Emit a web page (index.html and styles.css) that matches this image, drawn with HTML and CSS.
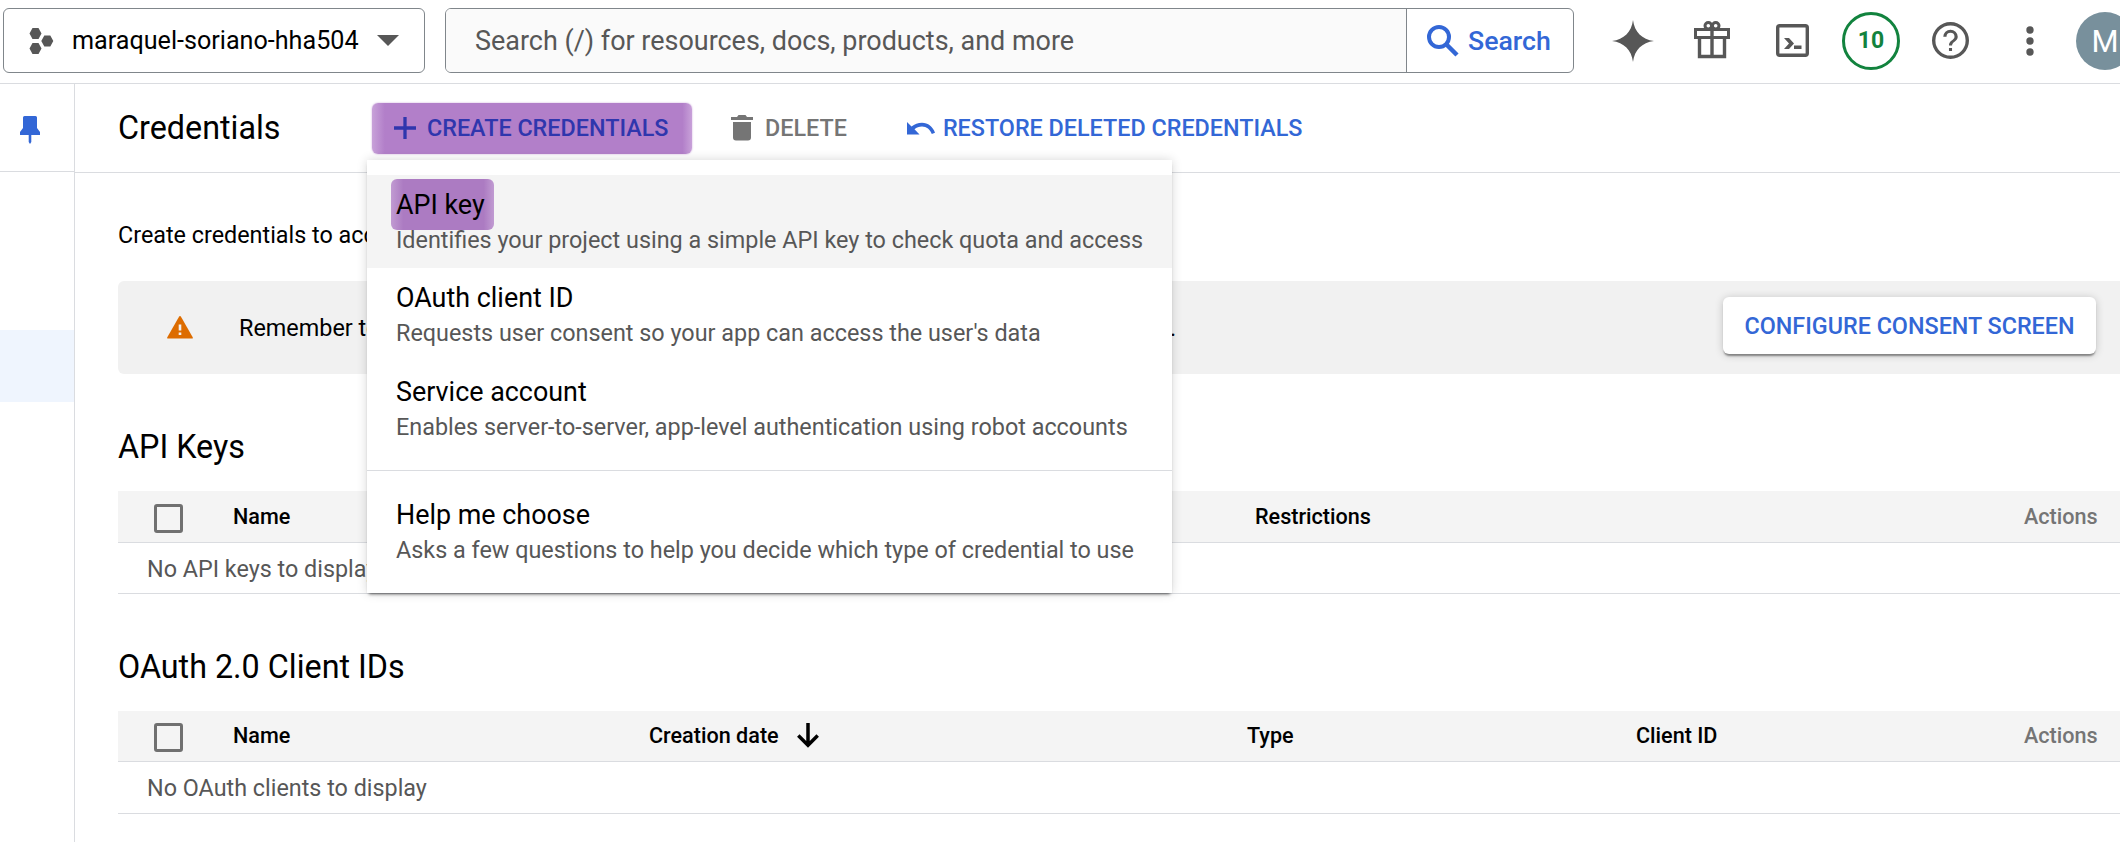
FILE: index.html
```html
<!DOCTYPE html>
<html lang="en">
<head>
<meta charset="utf-8">
<title>Credentials</title>
<link rel="stylesheet" href="styles.css">
</head>
<body>
<header class="topbar">
  <button class="project">
    <svg class="project-icon" width="25" height="28" viewBox="0 0 25 28"><path d="M3.500 1h6l3 5.500-3 5.500h-6l-3-5.500zM3.500 16h6l3 5.500-3 5.500h-6l-3-5.500zM15.300 8.500h6l3 5.500-3 5.500h-6l-3-5.500z" fill="#575757"/></svg>
    <span class="project-name">maraquel-soriano-hha504</span>
    <svg class="caret" width="22" height="11" viewBox="0 0 22 11"><path d="M0 0h22L11 11z" fill="#575757"/></svg>
  </button>
  <div class="search">
    <div class="search-input">Search (/) for resources, docs, products, and more</div>
    <button class="search-button">
      <svg width="32" height="32" viewBox="0 0 32 32" fill="none" stroke="#3367d6"><circle cx="12" cy="12" r="10" stroke-width="4"/><path d="M19 19l11 11" stroke-width="4.500"/></svg>
      <span>Search</span>
    </button>
  </div>
  <nav class="tools">
    <svg class="t-spark" width="42" height="42" viewBox="0 0 42 42"><path d="M21 0C22.500 12 30 19.500 42 21C30 22.500 22.500 30 21 42C19.500 30 12 22.500 0 21C12 19.500 19.500 12 21 0z" fill="#575757"/></svg>
    <svg class="t-gift" width="36" height="38" viewBox="0 0 36 38" fill="none" stroke="#575757"><path d="M1.500 8.500h33v8h-33z" stroke-width="3"/><path d="M5.500 17v18.500h25V17M18 8v28" stroke-width="3.400"/><circle cx="14.300" cy="4.800" r="3.300" stroke-width="3"/><circle cx="21.700" cy="4.800" r="3.300" stroke-width="3"/></svg>
    <svg class="t-shell" width="33" height="33" viewBox="0 0 33 33"><rect x="1.700" y="1.700" width="29.600" height="29.600" rx="2" fill="none" stroke="#575757" stroke-width="3.400"/><path d="M8 14h5l5 5.500-5 5.500H8l5-5.500zM18 21.500h7.500V25H18z" fill="#575757"/></svg>
    <span class="t-count">10</span>
    <svg class="t-help" width="37" height="37" viewBox="0 0 24 24"><path fill="#575757" d="M11 18.800h2v-2h-2zm1-18.800a12 12 0 1 0 0 24 12 12 0 0 0 0-24zm0 21.800a9.800 9.800 0 1 1 0-19.600 9.800 9.800 0 0 1 0 19.600zM12 5a4.700 4.700 0 0 0-4.700 4.600h2.100A2.600 2.600 0 0 1 12 7a2.600 2.600 0 0 1 2.600 2.600c0 2.300-3.600 2.200-3.600 5.700h2c0-2.500 3.700-2.900 3.700-5.800A4.700 4.700 0 0 0 12 5z"/></svg>
    <svg class="t-more" width="8" height="30" viewBox="0 0 8 30" fill="#575757"><circle cx="4" cy="4" r="3.700"/><circle cx="4" cy="15" r="3.700"/><circle cx="4" cy="26" r="3.700"/></svg>
    <span class="t-avatar">M</span>
  </nav>
</header>
<div class="shell">
  <aside class="rail">
    <div class="rail-pin"><svg width="20" height="28" viewBox="0 0 20 28"><path d="M4.500 0h11q1.500 0 1.500 1.500V12l3 4v3h-8.700v7L10 28l-1.300-2v-7H0v-3l3-4V1.500Q3 0 4.500 0z" fill="#3367d6"/></svg></div>
    <div class="rail-active"></div>
  </aside>
  <main class="main">
    <div class="titlebar">
      <h1 class="title">Credentials</h1>
      <button class="action create">
        <svg width="22" height="22" viewBox="0 0 22 22"><path d="M11 0v22M0 11h22" stroke="#2f36ad" stroke-width="3.300"/></svg>
        <span class="action-text">CREATE CREDENTIALS</span>
      </button>
      <button class="action delete">
        <svg width="22" height="26" viewBox="0 0 22 26"><path d="M0 2h6l1.500-2h7L16 2h6v3H0zM2 7h18v15.500q0 3-3 3H5q-3 0-3-3z" fill="#757575"/></svg>
        <span class="action-text">DELETE</span>
      </button>
      <button class="action restore">
        <svg width="28" height="13" viewBox="0 0 28 13"><path d="M0 0l4.500 4.500C7.500 2.300 11 .8 15 .8c6 0 11 4 13 10l-3.200 1.200C23.300 7.500 19.500 4.500 15 4.500c-3 0-5.500 1-7.500 2.800L12.500 12.500H0z" fill="#3367d6"/></svg>
        <span class="action-text">RESTORE DELETED CREDENTIALS</span>
      </button>
    </div>
    <div class="content">
      <p class="intro">Create credentials to access your enabled APIs</p>
      <div class="banner">
        <svg width="26" height="23" viewBox="0 0 26 23"><path d="M13 0q.6 0 1 .7L25.700 21.300q.5 1.200-.7 1.200H1q-1.200 0-.7-1.200L12 .7q.4-.7 1-.7z" fill="#dd6c00"/><path d="M11.700 8.500h2.600v6h-2.600zM11.700 16.500h2.600V19h-2.600z" fill="#f1f1f1"/></svg>
        <span class="banner-text">Remember to configure the OAuth consent screen with information about your application.</span>
        <button class="consent">CONFIGURE CONSENT SCREEN</button>
      </div>
      <h2 class="section-title">API Keys</h2>
      <div class="table keys">
        <div class="thead"><span class="check"></span><span>Name</span><span>Restrictions</span><span class="muted">Actions</span></div>
        <div class="trow">No API keys to display</div>
      </div>
      <h2 class="section-title">OAuth 2.0 Client IDs</h2>
      <div class="table clients">
        <div class="thead"><span class="check"></span><span>Name</span><span class="sorted">Creation date <svg width="22" height="25" viewBox="0 0 22 25" fill="none" stroke="#000" stroke-width="3.500"><path d="M11 0v22.500M1.300 12.500l9.700 9.700 9.700-9.700"/></svg></span><span>Type</span><span>Client ID</span><span class="muted">Actions</span></div>
        <div class="trow">No OAuth clients to display</div>
      </div>
    </div>
  </main>
</div>
<div class="menu">
  <div class="item active"><div class="item-title"><span class="mark">API key</span></div><div class="item-desc">Identifies your project using a simple API key to check quota and access</div></div>
  <div class="item"><div class="item-title">OAuth client ID</div><div class="item-desc">Requests user consent so your app can access the user's data</div></div>
  <div class="item"><div class="item-title">Service account</div><div class="item-desc">Enables server-to-server, app-level authentication using robot accounts</div></div>
  <div class="menu-rule"></div>
  <div class="item"><div class="item-title">Help me choose</div><div class="item-desc">Asks a few questions to help you decide which type of credential to use</div></div>
</div>
</body>
</html>
```
FILE: styles.css
```css
* { box-sizing: border-box; }
body { margin: 0; width: 2120px; height: 842px; overflow: hidden; background: #fff; color: #000; font-family: Roboto, "Liberation Sans", sans-serif; font-size: 23.350px; position: relative; }
button { font: inherit; color: inherit; background: none; border: 0; padding: 0; margin: 0; }
h1, h2, p { margin: 0; font-weight: 400; }
svg { display: block; flex: none; }
span, p, h1, h2, .item-title, .item-desc, .search-input, .trow { white-space: nowrap; }

.topbar { display: flex; height: 84px; padding: 8px 0 0 3px; border-bottom: 1px solid #dadce0; overflow: hidden; }
.project { display: flex; align-items: center; width: 422px; height: 65px; border: 1px solid #80868b; border-radius: 6px; padding: 0 25px; flex: none; }
.project-name { font-size: 25.150px; margin-left: 18px; width: 307px; text-align: left; }
.search { display: flex; width: 1129px; height: 65px; margin-left: 20px; border: 1px solid #80868b; border-radius: 6px; flex: none; overflow: hidden; }
.search-input { width: 961px; padding-left: 29px; line-height: 65px; background: #fafafa; color: #575757; font-size: 26.950px; border-right: 1px solid #80868b; }
.search-button { display: flex; align-items: center; padding-left: 20px; gap: 9px; color: #3367d6; font-size: 26.700px; font-weight: 500; }
.tools { display: flex; align-items: center; height: 65px; }
.t-spark { margin-left: 38px; }
.t-gift { margin-left: 40px; margin-top: -1px; }
.t-shell { margin-left: 46px; }
.t-count { width: 58px; height: 58px; margin-left: 33px; border: 3px solid #12833e; border-radius: 50%; line-height: 52px; text-align: center; color: #12833e; font-size: 23px; font-weight: 700; }
.t-help { margin-left: 32px; }
.t-more { margin-left: 57px; }
.t-avatar { width: 58px; height: 58px; flex: none; margin-left: 42px; border-radius: 50%; background: #78909c; color: #fff; font-size: 31px; line-height: 60px; text-align: center; }

.shell { display: flex; height: 758px; }
.rail { width: 75px; flex: none; border-right: 1px solid #dadce0; }
.rail-pin { height: 88px; padding: 32px 0 0 20px; border-bottom: 1px solid #dadce0; }
.rail-active { height: 72px; margin-top: 158px; background: #eff5fe; }
.main { flex: 1; min-width: 0; }
.titlebar { display: flex; align-items: center; height: 89px; padding: 2px 0 2px 43px; border-bottom: 1px solid #dadce0; }
.title { font-size: 32.300px; width: 254px; }
.action { display: flex; align-items: center; gap: 12px; height: 51px; font-weight: 500; }
.action-text { line-height: 30px; }
.create { width: 320px; padding-left: 22px; gap: 11px; border-radius: 6px; color: #2f36ad; background: linear-gradient(90deg, #c8a1d9, #b27fc9 4%, #b27fc9 97%, #c8a1d9); box-shadow: 0 0 2px #c8a1d9; }
.delete { color: #757575; margin-left: 39px; }
.restore { color: #3367d6; margin-left: 60px; gap: 8px; }

.content { padding-left: 43px; overflow: hidden; }
.intro { height: 108px; padding-top: 47px; line-height: 30px; }
.banner { display: flex; align-items: center; height: 93px; padding-left: 49px; background: #f1f1f1; border-radius: 6px 0 0 6px; }
.banner-text { margin-left: 46px; width: 1484px; padding-top: 1px; font-size: 23.400px; }
.consent { width: 373px; height: 57px; margin-bottom: 4px; border-radius: 6px; background: #fff; color: #3367d6; font-weight: 500; box-shadow: 0 3px 2px -1px rgba(0,0,0,.4), 0 1px 8px rgba(0,0,0,.2); }
.section-title { font-size: 32.300px; line-height: 40px; height: 117px; padding-top: 53px; }
.thead { display: grid; align-items: center; height: 52px; padding: 0 22px 1px 36px; background: #f4f4f4; border-bottom: 1px solid #dadce0; font-size: 21.600px; font-weight: 500; }
.keys .thead { grid-template-columns: 79px 1022px 769px 80px; }
.clients .thead { grid-template-columns: 79px 416px 598px 389px 388px 80px; height: 51px; }
.check { width: 29px; height: 29px; margin-top: 5px; border: 3px solid #707070; border-radius: 3px; }
.clients .check { margin-top: 4px; }
.muted { color: #757575; }
.sorted { display: flex; align-items: center; gap: 18px; }
.trow { height: 51px; padding-left: 29px; line-height: 52px; color: #575757; border-bottom: 1px solid #dadce0; }
.clients .trow { height: 52px; }

.menu { position: absolute; left: 367px; top: 160px; width: 805px; height: 433px; padding-top: 15px; background: #fff; box-shadow: 0 3px 3px -2px rgba(0,0,0,.6), 0 0 10px rgba(0,0,0,.16); }
.item { height: 93.300px; padding: 12px 0 0 29px; }
.item.active { background: #f4f4f4; }
.item-title { font-size: 26.900px; line-height: 36px; height: 36px; }
.item-desc { font-size: 23.380px; line-height: 35px; color: #575757; }
/* highlighter stroke behind the label */
.mark { position: relative; z-index: 0; }
.mark::before { content: ""; position: absolute; z-index: -1; left: -5px; right: -9px; top: -10px; height: 51px; border-radius: 6px; background: linear-gradient(90deg, #c19bd2, #ac7bc2 12%, #ac7bc2 90%, #c19bd2); }
.menu-rule { height: 1px; margin: 15px 0 14px; background: #dadce0; }
```
